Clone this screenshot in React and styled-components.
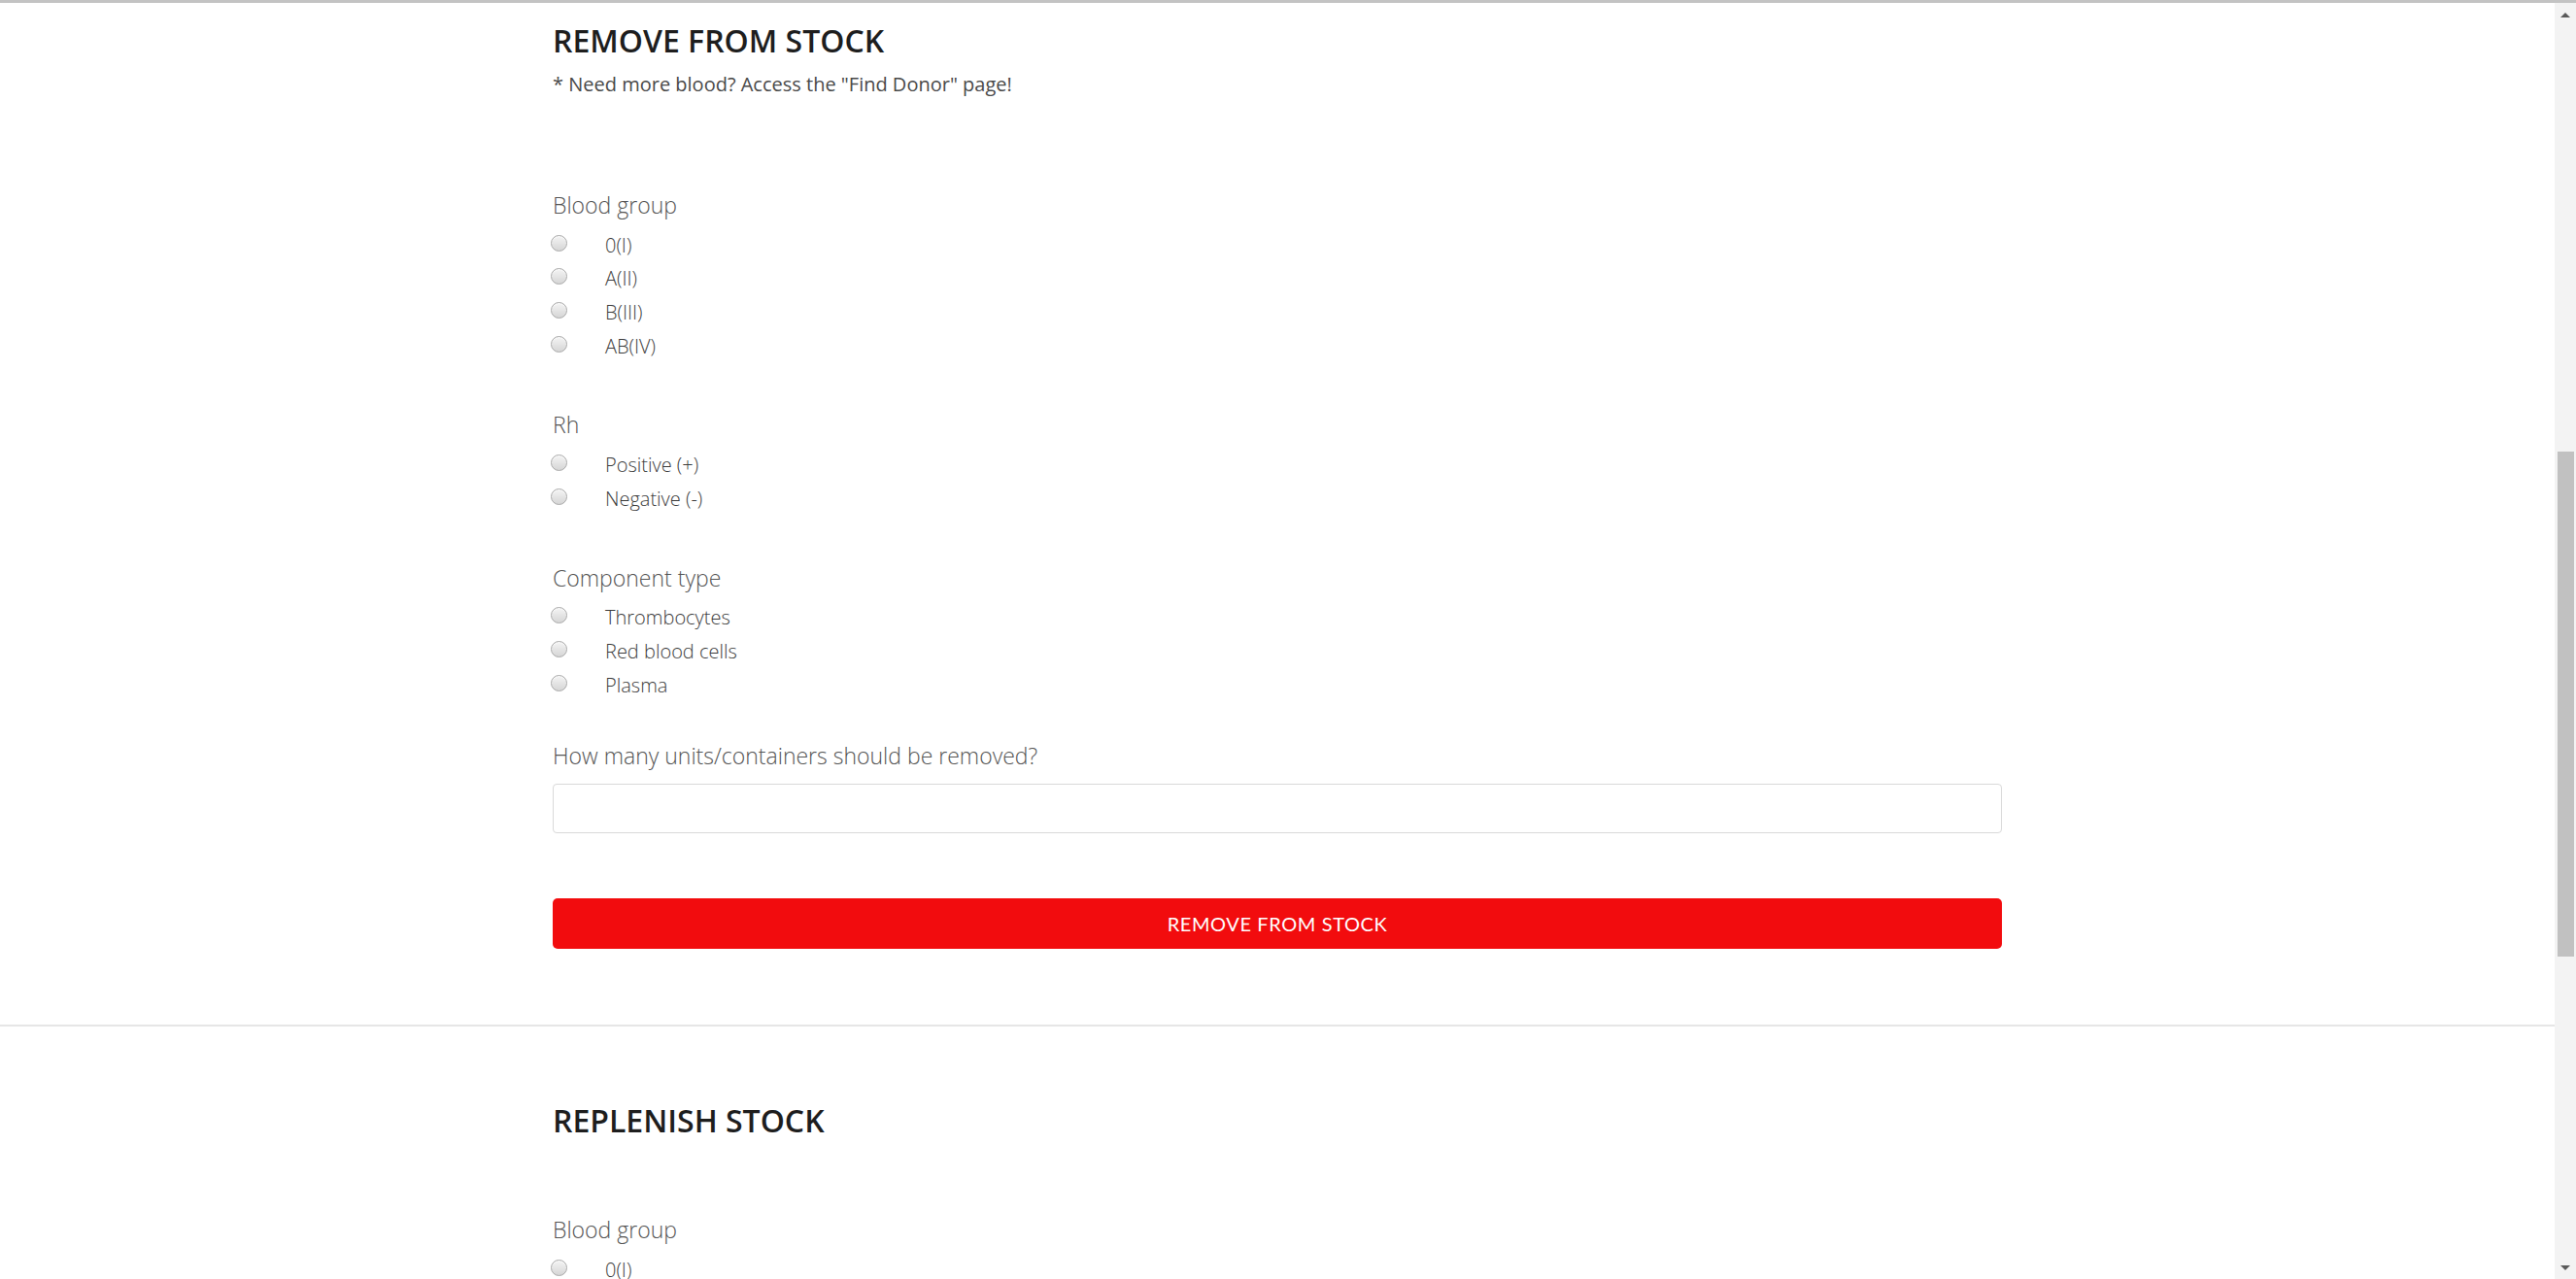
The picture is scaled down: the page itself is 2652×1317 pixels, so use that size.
import styled, { createGlobalStyle } from "styled-components";

const GlobalStyle = createGlobalStyle`
  html, body {
    margin: 0;
    padding: 0;
    height: 100%;
    overflow: hidden;
    background: #fff;
  }
  * { box-sizing: border-box; }
`;

const bloodGroups = ["0(I)", "A(II)", "B(III)", "AB(IV)"];
const rhOptions = ["Positive (+)", "Negative (-)"];
const componentTypes = ["Thrombocytes", "Red blood cells", "Plasma"];

function RadioGroup({ label, name, options, $first }) {
  return (
    <Field $first={$first}>
      <FieldLabel>{label}</FieldLabel>
      <OptionList>
        {options.map((opt) => (
          <Option key={opt}>
            <Radio type="radio" name={name} />
            <OptionText>{opt}</OptionText>
          </Option>
        ))}
      </OptionList>
    </Field>
  );
}

function App() {
  return (
    <Window>
      <GlobalStyle />
      <Page>
        <Section $bottom={78}>
          <Container>
            <Title>REMOVE FROM STOCK</Title>
            <Note>* Need more blood? Access the "Find Donor" page!</Note>
            <Form $top={95}>
              <RadioGroup label="Blood group" name="rm-group" options={bloodGroups} $first />
              <RadioGroup label="Rh" name="rm-rh" options={rhOptions} />
              <RadioGroup label="Component type" name="rm-type" options={componentTypes} />
              <InputField>
                <FieldLabel>How many units/containers should be removed?</FieldLabel>
                <TextInput type="text" />
              </InputField>
              <SubmitButton type="button">REMOVE FROM STOCK</SubmitButton>
            </Form>
          </Container>
        </Section>
        <Divider />
        <Section $top={78}>
          <Container>
            <Title>REPLENISH STOCK</Title>
            <Form $top={77}>
              <RadioGroup label="Blood group" name="add-group" options={bloodGroups} $first />
              <RadioGroup label="Rh" name="add-rh" options={rhOptions} />
            </Form>
          </Container>
        </Section>
      </Page>
      <Scrollbar>
        <Arrow $up />
        <Track>
          <Thumb />
        </Track>
        <Arrow />
      </Scrollbar>
    </Window>
  );
}

export default App;

const Window = styled.div`
  display: flex;
  height: 100vh;
  border-top: 3px solid #c3c3c3;
  overflow: hidden;
`;

const Page = styled.div`
  flex: 1;
  overflow: hidden;
  font-family: "Open Sans", "Liberation Sans", sans-serif;
`;

const Section = styled.section`
  padding-top: ${(p) => p.$top || 20}px;
  padding-bottom: ${(p) => p.$bottom || 0}px;
`;

const Container = styled.div`
  width: 1492px;
  margin: 0 auto;
`;

const Title = styled.h2`
  margin: 0;
  font-size: 32px;
  line-height: 38px;
  font-weight: 600;
  color: #1e1e1e;
`;

const Note = styled.p`
  margin: 12px 0 0;
  font-size: 20px;
  line-height: 27px;
  font-weight: 400;
  color: #4a4a4a;
`;

const Form = styled.form`
  margin-top: ${(p) => p.$top}px;
  display: flex;
  flex-direction: column;
`;

const Field = styled.div`
  margin-top: ${(p) => (p.$first ? 0 : 48)}px;
`;

const FieldLabel = styled.div`
  font-size: 23px;
  line-height: 32px;
  font-weight: 300;
  color: #555;
`;

const OptionList = styled.div`
  margin-top: 8px;
  display: flex;
  flex-direction: column;
`;

const Option = styled.label`
  height: 34.6px;
  display: flex;
  align-items: center;
  gap: 39px;
`;

const Radio = styled.input`
  appearance: none;
  margin: -4px 0 0 -2px;
  width: 17px;
  height: 17px;
  border-radius: 50%;
  border: 1px solid #a9a9a9;
  background: linear-gradient(#f4f4f4, #d6d6d6);
  box-shadow: inset 0 1px 1px rgba(255, 255, 255, 0.8);
`;

const OptionText = styled.span`
  font-size: 20px;
  font-weight: 300;
  color: #3c3c3c;
`;

const InputField = styled.div`
  margin-top: 40px;
  display: flex;
  flex-direction: column;
  gap: 13px;
`;

const TextInput = styled.input`
  width: 100%;
  height: 51px;
  border: 1px solid #d9d9d9;
  border-radius: 4px;
  background: #fff;
`;

const SubmitButton = styled.button`
  margin-top: 67px;
  width: 100%;
  height: 52px;
  border: none;
  border-radius: 5px;
  background: #f20c0e;
  color: #fff;
  font-family: "Lato", "Liberation Sans", sans-serif;
  font-size: 20px;
  letter-spacing: 0.6px;
`;

const Divider = styled.hr`
  margin: 0;
  border: none;
  border-top: 2px solid #e6e6e6;
`;

const Scrollbar = styled.div`
  width: 22px;
  flex-shrink: 0;
  background: #f3f3f3;
  display: flex;
  flex-direction: column;
  align-items: center;
`;

const Arrow = styled.div`
  height: 24px;
  width: 100%;
  display: flex;
  align-items: center;
  justify-content: center;
  &::after {
    content: "";
    width: 0;
    height: 0;
    border-left: 5px solid transparent;
    border-right: 5px solid transparent;
    ${(p) =>
      p.$up ? "border-bottom: 5px solid #5a5a5a;" : "border-top: 5px solid #5a5a5a;"}
  }
`;

const Track = styled.div`
  flex: 1;
  width: 100%;
  padding: 438px 2px 0 3px;
`;

const Thumb = styled.div`
  height: 520px;
  background: #c1c1c1;
`;
